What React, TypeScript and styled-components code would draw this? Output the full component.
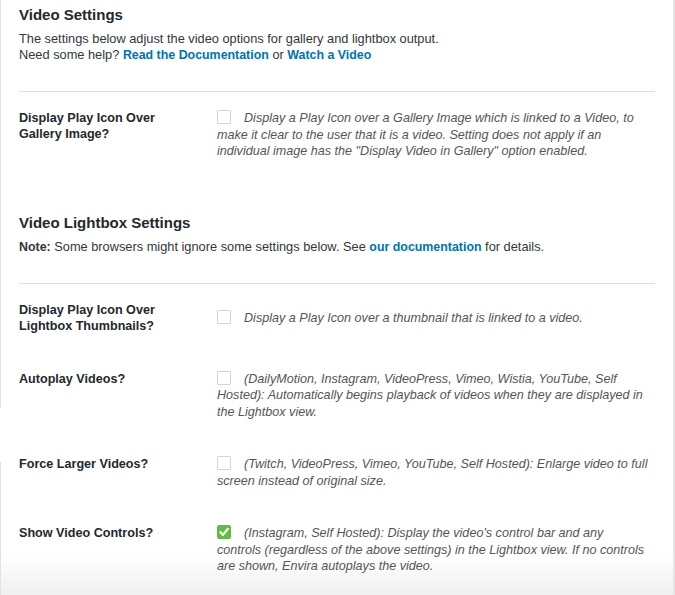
import React from 'react';
import styled, { createGlobalStyle } from 'styled-components';

const GlobalStyle = createGlobalStyle`
  html, body {
    margin: 0;
    padding: 0;
    background: #fff;
  }
  body {
    font-family: "Liberation Sans", Arial, sans-serif;
    -webkit-font-smoothing: antialiased;
  }
`;

const Page = styled.div`
  width: 675px;
  height: 595px;
  box-sizing: border-box;
  padding: 5px 18px 0 19px;
  border-right: 2px solid #e6e6e6;
  background:
    linear-gradient(to bottom, #e2e2e2 408px, transparent 408px, transparent 462px, #e2e2e2 462px) left top / 1px 100% no-repeat,
    linear-gradient(to bottom, #fff 555px, #f0f0f0 100%);
  overflow: hidden;
  color: #32373c;
`;

const SectionTitle = styled.h2<{ $spaced?: boolean }>`
  margin: ${p => (p.$spaced ? '35px' : '0')} 0 0;
  font-size: 15px;
  line-height: 20px;
  font-weight: 700;
  color: #23282d;
`;

const Intro = styled.p`
  margin: 6px 0 0;
  font-size: 12.8px;
  line-height: 16px;
  color: #32373c;

  strong {
    font-size: 12.4px;
  }
`;

const Link = styled.a`
  color: #0073aa;
  font-weight: 700;
  font-size: 12.4px;
  text-decoration: none;
`;

const Divider = styled.div`
  height: 1px;
  background: #dedede;
  margin-top: 28px;
`;

const Row = styled.div`
  display: flex;
`;

const Label = styled.div`
  flex: none;
  width: 198px;
  box-sizing: border-box;
  padding: 18px 20px 19px 0;
  font-size: 12.6px;
  line-height: 16px;
  font-weight: 700;
  color: #23282d;
`;

const Description = styled.div`
  flex: 1;
  align-self: center;
  padding: 18px 5px 18px 0;
  font-size: 12.6px;
  line-height: 16.5px;
  font-style: italic;
  color: #555;
`;

const Box = styled.span`
  display: inline-block;
  width: 14px;
  height: 14px;
  box-sizing: border-box;
  margin-right: 13px;
  vertical-align: top;
  border: 1px solid #d4d4d4;
  border-radius: 1px;
  background: #fff;
`;

const CheckedBox = styled.svg`
  display: inline-block;
  width: 14px;
  height: 14px;
  margin-right: 13px;
  vertical-align: top;
`;

const Checkbox: React.FC<{ checked?: boolean }> = ({ checked }) =>
  checked ? (
    <CheckedBox viewBox="0 0 14 14">
      <rect width="14" height="14" rx="2" fill="#62bb47" />
      <path d="M3.4 7.3 L6 9.9 L10.8 3.9" fill="none" stroke="#fff" strokeWidth="2.2" strokeLinecap="round" strokeLinejoin="round" />
    </CheckedBox>
  ) : (
    <Box />
  );

interface SettingProps {
  label: string;
  text: string;
  checked?: boolean;
}

const Setting: React.FC<SettingProps> = ({ label, text, checked }) => (
  <Row>
    <Label>{label}</Label>
    <Description>
      <Checkbox checked={checked} />
      {text}
    </Description>
  </Row>
);

export default function App() {
  return (
    <>
      <GlobalStyle />
      <Page>
        <SectionTitle>Video Settings</SectionTitle>
        <Intro>
          The settings below adjust the video options for gallery and lightbox output.
          <br />
          Need some help? <Link href="#">Read the Documentation</Link> or <Link href="#">Watch a Video</Link>
        </Intro>
        <Divider />
        <Setting
          label="Display Play Icon Over Gallery Image?"
          text='Display a Play Icon over a Gallery Image which is linked to a Video, to make it clear to the user that it is a video. Setting does not apply if an individual image has the "Display Video in Gallery" option enabled.'
        />

        <SectionTitle $spaced>Video Lightbox Settings</SectionTitle>
        <Intro>
          <strong>Note:</strong> Some browsers might ignore some settings below. See{' '}
          <Link href="#">our documentation</Link> for details.
        </Intro>
        <Divider />
        <Setting
          label="Display Play Icon Over Lightbox Thumbnails?"
          text="Display a Play Icon over a thumbnail that is linked to a video."
        />
        <Setting
          label="Autoplay Videos?"
          text="(DailyMotion, Instagram, VideoPress, Vimeo, Wistia, YouTube, Self Hosted): Automatically begins playback of videos when they are displayed in the Lightbox view."
        />
        <Setting
          label="Force Larger Videos?"
          text="(Twitch, VideoPress, Vimeo, YouTube, Self Hosted): Enlarge video to full screen instead of original size."
        />
        <Setting
          label="Show Video Controls?"
          checked
          text="(Instagram, Self Hosted): Display the video's control bar and any controls (regardless of the above settings) in the Lightbox view. If no controls are shown, Envira autoplays the video."
        />
      </Page>
    </>
  );
}
